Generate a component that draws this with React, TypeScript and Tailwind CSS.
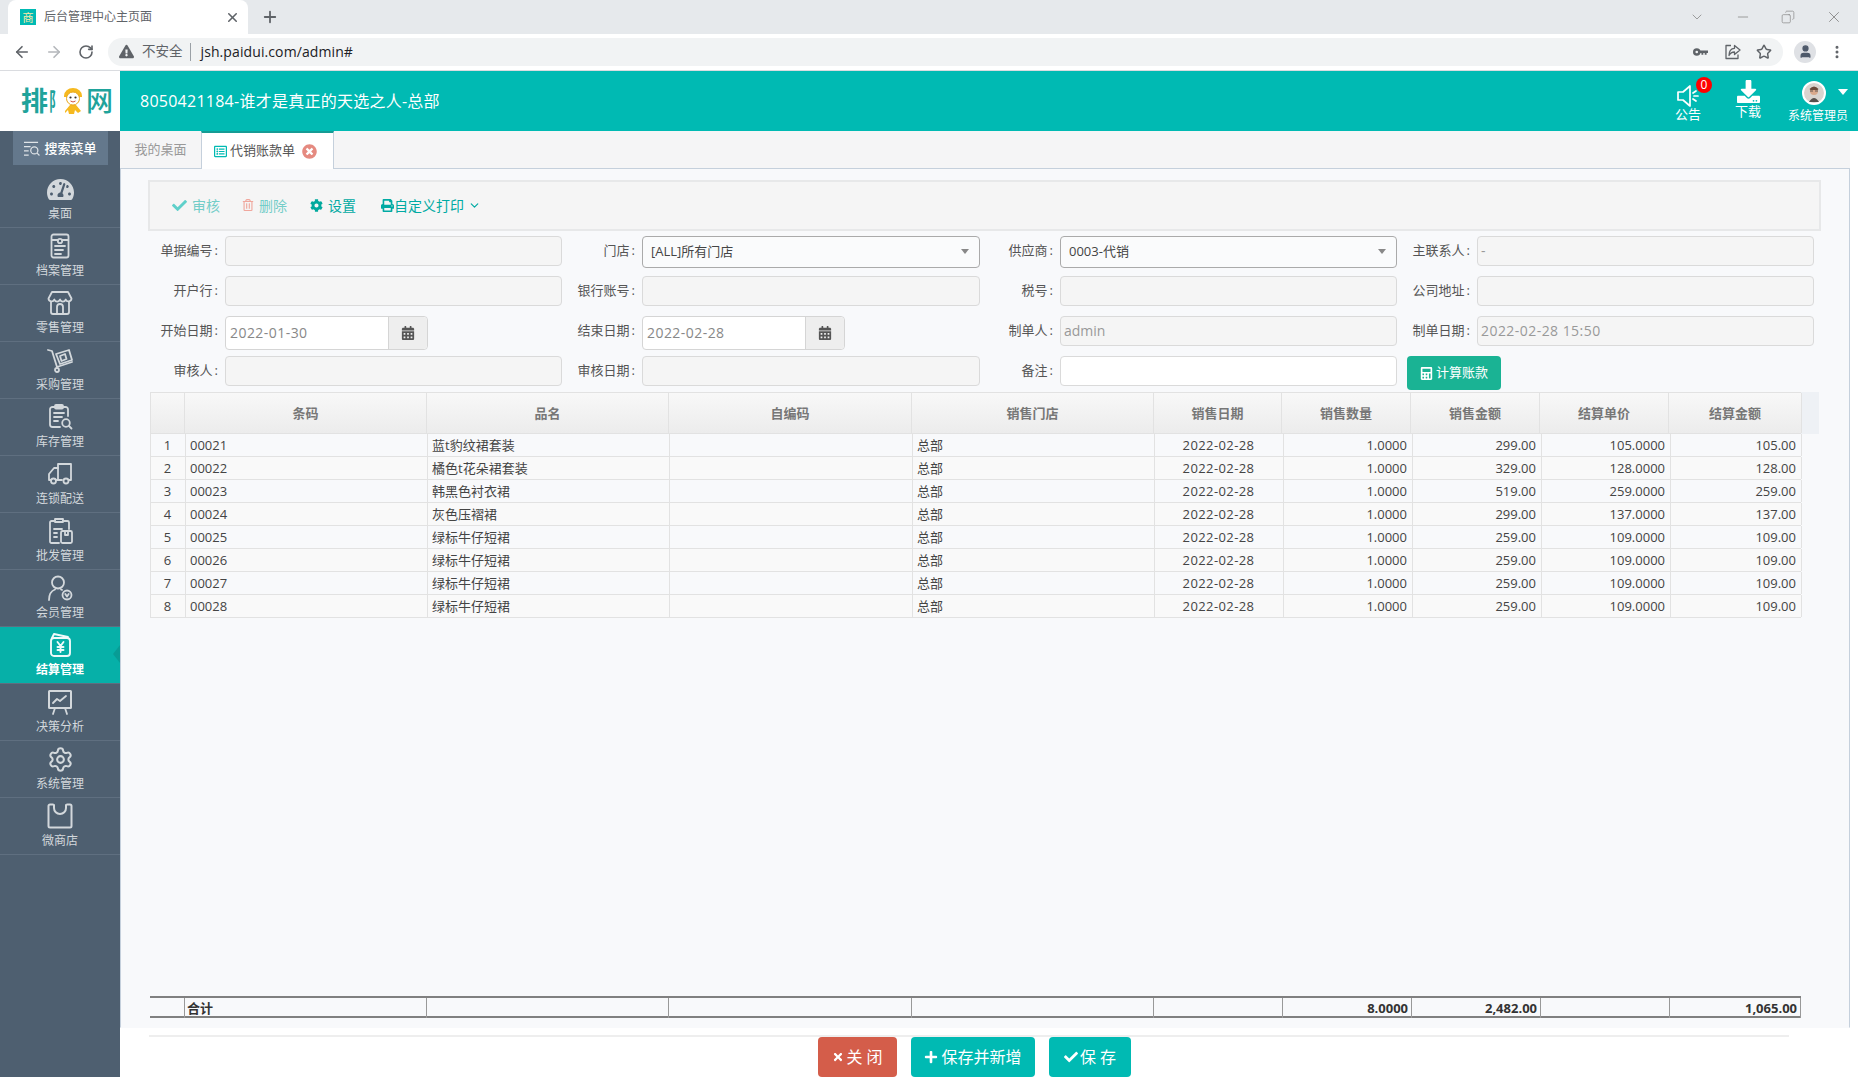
import { ArrowLeft, ArrowRight, ChevronDown, MoreVertical, Plus, RotateCw, Settings, Star, Minus, X, Copy, User } from "lucide-react";
import type { ReactNode } from "react";
import {
  FaCalculator,
  FaCalendarAlt,
  FaCheck,
  FaCog,
  FaDownload,
  FaExclamationTriangle,
  FaPlus,
  FaPrint,
  FaRegTrashAlt,
  FaTachometerAlt,
  FaTimes,
  FaTimesCircle,
  FaRegListAlt,
} from "react-icons/fa";

const font = "[font-family:'Open_Sans','Noto_Sans_CJK_SC',sans-serif]";

function Ico({ children }: { children: ReactNode }) {
  return (
    <svg viewBox="0 0 26 26" width="26" height="26" fill="none" stroke="#d3d8dc" strokeWidth="1.8" strokeLinecap="round" strokeLinejoin="round">
      {children}
    </svg>
  );
}

const navItems: { label: string; icon: ReactNode; active?: boolean }[] = [
  { label: "桌面", icon: <FaTachometerAlt size={27} color="#d3d8dc" /> },
  {
    label: "档案管理",
    icon: (
      <Ico>
        <rect x="4.5" y="1.5" width="17" height="23" rx="2" />
        <path d="M5 7h6M15 7h6" />
        <circle cx="13" cy="8" r="2.2" />
        <path d="M8 13h10M8 17h8M8 21h6" />
      </Ico>
    ),
  },
  {
    label: "零售管理",
    icon: (
      <Ico>
        <path d="M5 2h16l3.5 6.5a3 3 0 0 1-5.8 1 3 3 0 0 1-5.7 0 3 3 0 0 1-5.7 0 3 3 0 0 1-5.8-1z" />
        <path d="M4 12v10a2 2 0 0 0 2 2h14a2 2 0 0 0 2-2V12" />
        <path d="M10 24v-7a3 3 0 0 1 6 0v7" />
      </Ico>
    ),
  },
  {
    label: "采购管理",
    icon: (
      <Ico>
        <path d="M1 3l4 1 5 16 15-5" />
        <circle cx="10" cy="23" r="2" />
        <path d="M9 7l13-4 3 10-12 4z" />
        <path d="M13 9l5-2 1.5 5-5 2z" />
      </Ico>
    ),
  },
  {
    label: "库存管理",
    icon: (
      <Ico>
        <path d="M8 3H5.5A2.5 2.5 0 0 0 3 5.5v15A2.5 2.5 0 0 0 5.5 23H13" />
        <path d="M16 3h2.5A2.5 2.5 0 0 1 21 5.5V12" />
        <rect x="8" y="1" width="8" height="3.5" rx="1" fill="#d3d8dc" />
        <path d="M7 9h10M7 13h8M7 17h4" />
        <circle cx="19" cy="19" r="3.8" />
        <path d="M22 22l2.5 2.5" />
      </Ico>
    ),
  },
  {
    label: "连锁配送",
    icon: (
      <Ico>
        <path d="M9 19h6M11 19V3h13v16h-2" />
        <path d="M11 7H7l-5 6v6h2" />
        <circle cx="6.5" cy="20" r="2.5" />
        <circle cx="19" cy="20" r="2.5" />
      </Ico>
    ),
  },
  {
    label: "批发管理",
    icon: (
      <Ico>
        <path d="M8 3H4.5A1.5 1.5 0 0 0 3 4.5v19A1.5 1.5 0 0 0 4.5 25H12" />
        <path d="M16 3h4.5A1.5 1.5 0 0 1 22 4.5V11" />
        <path d="M8 1v3h8V1z" />
        <path d="M7 11h8M7 15h3M7 19h3" />
        <rect x="14" y="13" width="11" height="12" rx="1.5" />
        <path d="M18 13v4h3v-4" />
      </Ico>
    ),
  },
  {
    label: "会员管理",
    icon: (
      <Ico>
        <circle cx="11" cy="7.5" r="6" />
        <path d="M2 25c0-5 2-9 6-10.5" />
        <path d="M14 14.5l1 .4" />
        <circle cx="20" cy="20" r="4.5" />
        <path d="M18.3 19l1.7 2.5 1.7-2.5" />
      </Ico>
    ),
  },
  {
    label: "结算管理",
    active: true,
    icon: (
      <svg viewBox="0 0 26 26" width="26" height="26" fill="none" stroke="#eefafa" strokeWidth="1.9" strokeLinecap="round" strokeLinejoin="round">
        <rect x="4" y="6" width="19" height="18" rx="3" />
        <path d="M5 6l2-4 14 3" />
        <path d="M10.5 10l3 4 3-4M13.5 14v6M10.5 15h6M10.5 18h6" />
      </svg>
    ),
  },
  {
    label: "决策分析",
    icon: (
      <Ico>
        <rect x="2" y="2" width="22" height="17" rx="0.5" strokeWidth="2" />
        <path d="M6 14l4-4 3 2 6-5" />
        <path d="M8 19l-2 6M18 19l2 6" />
      </Ico>
    ),
  },
  { label: "系统管理", icon: <Settings size={27} color="#d3d8dc" strokeWidth={1.8} /> },
  {
    label: "微商店",
    icon: (
      <Ico>
        <path d="M6 1.500H3a1.500 1.500 0 0 0-1.500 1.500v20A1.500 1.500 0 0 0 3 24.500h20a1.500 1.500 0 0 0 1.500-1.500V3A1.500 1.500 0 0 0 23 1.500h-3" strokeWidth="2" />
        <path d="M7 2v3a6 6 0 0 0 12 0V2" strokeWidth="2" />
      </Ico>
    ),
  },
];

const rows = [
  ["00021", "蓝t豹纹裙套装", "299.00", "105.0000", "105.00"],
  ["00022", "橘色t花朵裙套装", "329.00", "128.0000", "128.00"],
  ["00023", "韩黑色衬衣裙", "519.00", "259.0000", "259.00"],
  ["00024", "灰色压褶裙", "299.00", "137.0000", "137.00"],
  ["00025", "绿标牛仔短裙", "259.00", "109.0000", "109.00"],
  ["00026", "绿标牛仔短裙", "259.00", "109.0000", "109.00"],
  ["00027", "绿标牛仔短裙", "259.00", "109.0000", "109.00"],
  ["00028", "绿标牛仔短裙", "259.00", "109.0000", "109.00"],
];

const headCols = "grid-cols-[34px_242px_242px_243px_242px_128px_129px_129px_129px_133px]";
const bodyCols = "grid-cols-[35px_242px_242px_243px_242px_129px_129px_129px_129px_131px]";

function Label({ children }: { children: ReactNode }) {
  return (
    <label className="pr-[7px] text-right text-[13px] text-[#555]">
      {children}
      <span className="ml-[2px]">:</span>
    </label>
  );
}

function Field({ value, white, wide }: { value?: string; white?: boolean; wide?: boolean }) {
  return (
    <div
      className={`flex h-[30px] items-center rounded-[4px] border border-[#dadada] px-[3px] pb-[1px] text-[14px] text-[#999] ${white ? "bg-white" : "bg-[#f5f5f5]"} ${wide ? "tracking-[0.45px]" : ""}`}
    >
      {value}
    </div>
  );
}

function SelectBox({ value }: { value: string }) {
  return (
    <div className="flex h-[32px] items-center justify-between self-start rounded-[4px] border border-[#aaa] bg-[#fafbfc] pl-[8px] pr-[10px] text-[13px] text-[#444]">
      {value}
      <span className="mt-[-2px] h-0 w-0 border-x-[4px] border-t-[5px] border-x-transparent border-t-[#888]" />
    </div>
  );
}

function DateBox({ value }: { value: string }) {
  return (
    <div className="flex h-[34px] w-[203px] self-start rounded-[4px] border border-[#d5d5d5] bg-white">
      <div className="flex flex-1 items-center px-[4px] pb-[1px] text-[14px] tracking-[0.45px] text-[#888]">{value}</div>
      <div className="flex w-[39px] items-center justify-center rounded-r-[4px] border-l border-[#d5d5d5] bg-[#eee]">
        <FaCalendarAlt size={14} color="#555" />
      </div>
    </div>
  );
}

function Cell({ children, right, center }: { children?: ReactNode; right?: boolean; center?: boolean }) {
  return (
    <div className={`truncate border-r border-[#e2e2e2] pl-[4px] pr-[5px] leading-[22px] ${right ? "text-right" : center ? "text-center" : ""}`}>
      {children}
    </div>
  );
}

function HeadCell({ children }: { children?: ReactNode }) {
  return <div className="flex items-center justify-center border-r border-[#e2e2e2] pt-[2px] font-semibold">{children}</div>;
}

function SumCell({ children, left }: { children?: ReactNode; left?: boolean }) {
  return <div className={`border-r border-[#999] pl-[2px] pr-[3px] leading-[20px] ${left ? "" : "text-right"}`}>{children}</div>;
}

export default function App() {
  return (
    <div className={`flex h-[1077px] w-[1858px] flex-col overflow-hidden bg-white ${font}`}>
      {/* browser chrome */}
      <div className="flex h-[34px] items-end bg-[#e6e9ec] pl-[8px]">
        <div className="flex h-[34px] w-[240px] items-center rounded-t-[8px] bg-white pl-[12px] pr-[8px]">
          <span className="flex h-[16px] w-[16px] items-center justify-center bg-[#00bab3] text-[11px] leading-none text-[#fde9a8]">商</span>
          <span className="ml-[8px] flex-1 text-[12px] text-[#5f6368]">后台管理中心主页面</span>
          <X size={15} color="#5f6368" strokeWidth={2.5} />
        </div>
        <div className="flex h-[34px] w-[44px] items-center justify-center">
          <Plus size={18} color="#5f6368" strokeWidth={2.4} />
        </div>
        <div className="flex-1" />
        <div className="flex h-[34px] items-center gap-[30px] pr-[15px] text-[#888]">
          <ChevronDown size={16} strokeWidth={1.2} />
          <Minus size={16} strokeWidth={1.2} />
          <Copy size={14} strokeWidth={1.2} className="-scale-x-100" />
          <X size={18} strokeWidth={1.2} />
        </div>
      </div>
      <div className="flex h-[37px] items-center border-b border-[#dadce0] bg-white pb-[1px] pl-[13px]">
        <ArrowLeft size={18} color="#5f6368" strokeWidth={2.2} />
        <ArrowRight size={18} color="#b4b7bb" strokeWidth={2.2} className="ml-[14px]" />
        <RotateCw size={16} color="#5f6368" strokeWidth={2.4} className="ml-[15px]" />
        <div className="ml-[14px] flex h-[28px] w-[1675px] items-center rounded-full bg-[#f1f3f4] pl-[11px] pr-[11px]">
          <FaExclamationTriangle size={15} color="#5f6368" />
          <span className="ml-[8px] text-[13.5px] text-[#5f6368]">不安全</span>
          <span className="ml-[7px] h-[18px] w-px bg-[#9aa0a6]" />
          <span className="ml-[10px] text-[14px] tracking-[0.1px] text-[#202124]">jsh.paidui.com/admin#</span>
          <div className="flex-1" />
          <svg viewBox="0 0 16 10" width="15" height="10" fill="#5f6368">
            <circle cx="4" cy="5" r="4" />
            <circle cx="4" cy="5" r="1.400" fill="#f1f3f4" />
            <path d="M7 3.500h9v2.500h-1.500v2h-2V6H11v2H9V6H7z" />
          </svg>
          <svg viewBox="0 0 16 16" width="16" height="16" fill="none" stroke="#5f6368" strokeWidth="1.300" strokeLinejoin="round" className="ml-[17px]">
            <path d="M6 1.500H1v13h12v-4" />
            <path d="M9.500 1.500L15 6l-5.500 4.500V8C6.500 8 5 9.500 4 11.500c0-4 2-7 5.500-7.200z" />
          </svg>
          <Star size={16} color="#5f6368" strokeWidth={2.2} className="ml-[15px]" />
        </div>
        <div className="ml-[11px] flex h-[22px] w-[22px] items-center justify-center rounded-full bg-[#dfe1e5]">
          <User size={15} color="#4f5a6b" fill="#4f5a6b" />
        </div>
        <MoreVertical size={16} color="#5f6368" strokeWidth={2.5} className="ml-[13px]" />
      </div>

      {/* header */}
      <header className="flex h-[60px] items-stretch bg-[#00bab3]">
        <div className="flex w-[120px] items-center bg-white pb-[1px] pl-[21px]">
          <span className="w-[28px] text-[27px] font-bold leading-none text-[#1fa39b]">排</span>
          <span className="mr-[-12px] w-[24px] origin-left scale-x-50 text-[24px] font-bold leading-none text-[#1fa39b]">阝</span>
          <svg viewBox="0 0 24 28" width="24" height="28">
            <path d="M4 24l5-6h6l5 6-3 2-3-3-1 4h-5l-1-4-3 3z" fill="#f6b91f" />
            <path d="M3 9a9 8 0 0 1 18 0v1H3z" fill="#f6b91f" />
            <circle cx="12" cy="11.500" r="6.500" fill="#fff" stroke="#e9a91b" strokeWidth="1" />
            <circle cx="9.500" cy="10.500" r="1.100" fill="#333" />
            <circle cx="14.500" cy="10.500" r="1.100" fill="#333" />
            <path d="M9.500 14q2.500 2 5 0" stroke="#d4503b" strokeWidth="1" fill="none" />
          </svg>
          <span className="ml-[1px] text-[27px] font-medium leading-none text-[#1fa39b]">网</span>
        </div>
        <h1 className="ml-[20px] flex items-center text-[16px] font-normal tracking-[0.25px] text-white">8050421184-谁才是真正的天选之人-总部</h1>
        <div className="flex-1" />
        <div className="relative flex w-[60px] flex-col items-center pt-[13px] text-white">
          <svg viewBox="0 0 24 24" width="24" height="24" fill="none" stroke="#fff" strokeWidth="1.700" strokeLinejoin="round" strokeLinecap="round">
            <path d="M14 2v20l-7-6H2V8h5z" />
            <path d="M17 9l3-2M18 12h4M17 15l3 2" />
          </svg>
          <span className="mt-[-3px] text-[13px] leading-[18px]">公告</span>
          <span className="absolute left-[38px] top-[6px] flex h-[16px] w-[16px] items-center justify-center rounded-full bg-[#f00] text-[12px] leading-none">0</span>
        </div>
        <div className="flex w-[60px] flex-col items-center pt-[9px] text-white">
          <FaDownload size={23} />
          <span className="mt-[-1px] text-[13px] leading-[18px]">下载</span>
        </div>
        <div className="relative flex w-[80px] flex-col items-center pt-[10px] text-white">
          <svg viewBox="0 0 24 24" width="24" height="24" className="mr-[8px]">
            <circle cx="12" cy="12" r="11" fill="#d9d4cf" stroke="#fff" strokeWidth="2" />
            <circle cx="12" cy="10" r="4" fill="#d9a98c" />
            <path d="M7.500 8q4.500-5 9 0l-1 1h-7z" fill="#6a4a3a" />
            <path d="M8 10h3M13 10h3" stroke="#444" strokeWidth="0.800" />
            <path d="M7 21q5-8 10 0z" fill="#55504c" />
          </svg>
          <span className="mt-[3px] text-[12px] leading-[16px]">系统管理员</span>
          <span className="absolute right-[10px] top-[18px] h-0 w-0 border-x-[5px] border-t-[6px] border-x-transparent border-t-white" />
        </div>
      </header>

      <div className="flex flex-1 overflow-hidden">
        {/* sidebar */}
        <aside className="w-[120px] shrink-0 bg-[#4e5f70]">
          <div className="mx-auto flex h-[34px] w-[95px] items-center justify-center gap-[4px] bg-[#64788c] pt-[1px] text-[13px] font-medium text-white">
            <svg viewBox="0 0 18 16" width="17" height="15" fill="none" stroke="#dfe4e8" strokeWidth="1.300">
              <path d="M1 1.500h15M1 6h7M1 10.500h5M1 15h5" />
              <circle cx="12" cy="10" r="3.800" />
              <path d="M15 13l2.500 2.500" />
            </svg>
            搜索菜单
          </div>
          <nav className="mt-[6px] flex flex-col">
            {navItems.map((item) => (
              <div
                key={item.label}
                className={`relative flex h-[57px] flex-col items-center border-b border-[#5f6f80] pt-[4px] ${
                  item.active ? "bg-[#06b0a8] font-semibold text-white" : "text-[#d3d8dc]"
                }`}
              >
                <div className="flex h-[28px] items-center">{item.icon}</div>
                <span className="mt-[3px] text-[12px] leading-[16px]">{item.label}</span>
                {item.active && (
                  <span className="absolute right-0 top-[18px] h-0 w-0 border-y-[9px] border-r-[7px] border-y-transparent border-r-[#089c95]" />
                )}
              </div>
            ))}
          </nav>
        </aside>

        {/* main */}
        <main className="flex min-w-0 flex-1 flex-col">
          <div className="mr-[8px] flex h-[38px] items-end border-b border-[#c5d0dc] bg-[#f5f5f6]">
            <div className="flex h-[37px] w-[81px] items-center justify-center text-[13px] text-[#999]">我的桌面</div>
            <div className="mb-[-1px] flex h-[38px] w-[133px] items-center gap-[3px] border-x border-t-2 border-[#c5d0dc] border-t-[#169b94] bg-white pl-[12px] text-[13px] text-[#555]">
              <FaRegListAlt size={13} color="#00bab3" />
              代销账款单
              <FaTimesCircle size={15} color="#e58a80" className="ml-[4px]" />
            </div>
          </div>
          <div className="mr-[8px] flex h-[861px] flex-col border-x border-b border-[#c5d0dc] border-b-[#f8f9fb] bg-[#f8f9fb] pl-[27px] pr-[28px] pt-[11px]">
            <div className="flex h-[51px] items-center border-2 border-[#e7e8e9] bg-[#f5f5f5] pb-[1px] pl-[22px] text-[14px]">
              <span className="flex items-center gap-[5px] text-[#73cdc8]">
                <FaCheck size={15} color="#5fd0ca" /> 审核
              </span>
              <span className="ml-[22px] flex items-center gap-[5px] text-[#73cdc8]">
                <FaRegTrashAlt size={12} color="#f0a79d" /> 删除
              </span>
              <span className="ml-[23px] flex items-center gap-[5px] text-[#00aaa3]">
                <FaCog size={13} color="#00a99d" /> 设置
              </span>
              <span className="ml-[25px] flex items-center text-[#00aaa3]">
                <FaPrint size={13} />
                自定义打印
                <ChevronDown size={13} strokeWidth={2.2} className="ml-[4px]" />
              </span>
            </div>

            <div className="mt-[5px] grid grid-cols-[77px_337px_80px_338px_80px_337px_80px_337px] grid-rows-[30px_30px_30px_30px] items-center gap-y-[10px]">
              <Label>单据编号</Label>
              <Field />
              <Label>门店</Label>
              <SelectBox value="[ALL]所有门店" />
              <Label>供应商</Label>
              <SelectBox value="0003-代销" />
              <Label>主联系人</Label>
              <Field value="-" />

              <Label>开户行</Label>
              <Field />
              <Label>银行账号</Label>
              <Field />
              <Label>税号</Label>
              <Field />
              <Label>公司地址</Label>
              <Field />

              <Label>开始日期</Label>
              <DateBox value="2022-01-30" />
              <Label>结束日期</Label>
              <DateBox value="2022-02-28" />
              <Label>制单人</Label>
              <Field value="admin" />
              <Label>制单日期</Label>
              <Field value="2022-02-28 15:50" wide />

              <Label>审核人</Label>
              <Field />
              <Label>审核日期</Label>
              <Field />
              <Label>备注</Label>
              <Field white />
              <div className="col-span-2 ml-[10px] flex h-[34px] w-[94px] items-center justify-center gap-[3px] self-start rounded-[4px] bg-[#1ab394] text-[13px] text-white">
                <FaCalculator size={13} />
                计算账款
              </div>
            </div>

            {/* grid */}
            <div className="ml-[2px] mt-[6px] flex flex-1 flex-col">
              <div className="w-[1669px] bg-[#eef1f5]">
                <div className={`grid h-[42px] w-[1651px] border-y border-l border-[#e2e2e2] bg-gradient-to-b from-[#f8f8f8] to-[#ececec] text-[13px] text-[#777] ${headCols}`}>
                  <HeadCell />
                  <HeadCell>条码</HeadCell>
                  <HeadCell>品名</HeadCell>
                  <HeadCell>自编码</HeadCell>
                  <HeadCell>销售门店</HeadCell>
                  <HeadCell>销售日期</HeadCell>
                  <HeadCell>销售数量</HeadCell>
                  <HeadCell>销售金额</HeadCell>
                  <HeadCell>结算单价</HeadCell>
                  <HeadCell>结算金额</HeadCell>
                </div>
              </div>
              <div className="w-[1651px] border-l border-[#e2e2e2] text-[13px] text-[#444]">
                {rows.map((r, i) => (
                  <div key={r[0]} className={`grid h-[23px] border-b border-[#e2e2e2] ${bodyCols} ${i % 2 ? "bg-[#f9f9f9]" : "bg-[#f8f9fb]"}`}>
                    <Cell center>{i + 1}</Cell>
                    <Cell>{r[0]}</Cell>
                    <Cell>{r[1]}</Cell>
                    <Cell />
                    <Cell>总部</Cell>
                    <Cell center>
                      <span className="tracking-[0.4px]">2022-02-28</span>
                    </Cell>
                    <Cell right>1.0000</Cell>
                    <Cell right>{r[2]}</Cell>
                    <Cell right>{r[3]}</Cell>
                    <Cell right>{r[4]}</Cell>
                  </div>
                ))}
              </div>
              <div className="flex-1" />
              <div className={`mb-[9px] grid h-[22px] w-[1651px] border-y-2 border-y-[#808080] text-[13px] font-bold text-[#333] ${bodyCols}`}>
                <SumCell />
                <SumCell left>合计</SumCell>
                <SumCell />
                <SumCell />
                <SumCell />
                <SumCell />
                <SumCell>8.0000</SumCell>
                <SumCell>2,482.00</SumCell>
                <SumCell />
                <SumCell>1,065.00</SumCell>
              </div>
            </div>
          </div>
          <div className="ml-[29px] mr-[69px] mt-[7px] flex flex-1 justify-center gap-[14px] border-t-2 border-[#eee] pl-[11px] text-[16px] text-white">
            <button className="flex h-[40px] w-[79px] items-center justify-center gap-[2px] rounded-[4px] bg-[#d45d4a]">
              <FaTimes size={12} />关 闭
            </button>
            <button className="flex h-[40px] w-[124px] items-center justify-center gap-[3px] rounded-[4px] bg-[#00bab3]">
              <FaPlus size={14} />保存并新增
            </button>
            <button className="flex h-[40px] w-[82px] items-center justify-center gap-[2px] rounded-[4px] bg-[#00bab3]">
              <FaCheck size={14} />保 存
            </button>
          </div>
        </main>
      </div>
    </div>
  );
}
